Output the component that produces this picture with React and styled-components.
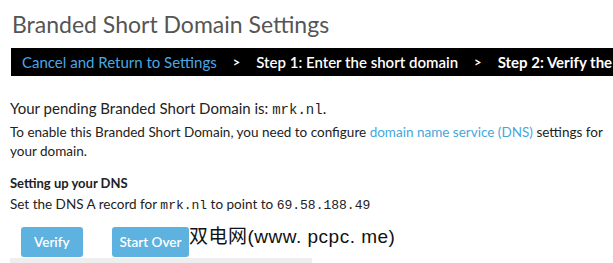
import React from 'react';
import styled, { createGlobalStyle } from 'styled-components';

const Global = createGlobalStyle`
  body {
    margin: 0;
    background: #ffffff;
    font-family: Lato, 'Open Sans', sans-serif;
    overflow: hidden;
  }
`;

const Page = styled.div`
  position: relative;
  width: 613px;
  height: 263px;
  overflow: hidden;
  padding: 0 0 0 10px;
  box-sizing: border-box;
`;

const Title = styled.h1`
  margin: 0;
  padding: 9px 0 0 2px;
  font-size: 23px;
  font-weight: 400;
  color: #555555;
  line-height: 30px;
  white-space: nowrap;
`;

const Steps = styled.div`
  margin: 9px 0 0 1px;
  height: 28px;
  background: #000000;
  display: flex;
  align-items: center;
  gap: 16px;
  padding-left: 11px;
  white-space: nowrap;
  font-size: 15px;
  width: 700px;
`;

const Step = styled.span`
  color: ${p => (p.$link ? '#4aa8e4' : '#ffffff')};
  font-weight: ${p => (p.$bold ? 700 : p.$link ? 400 : 600)};
`;

const Arrow = styled.span`
  color: #ffffff;
  font-weight: 700;
  font-size: 13px;
`;

const Lead = styled.p`
  margin: 22px 0 0;
  font-size: 15px;
  line-height: 20px;
  color: #222222;
`;

const Para = styled.p`
  margin: 3px 0 0;
  font-size: 13.5px;
  line-height: 19px;
  color: #222222;
`;

const Link = styled.a`
  color: #45a7dc;
  text-decoration: none;
`;

const Code = styled.code`
  font-family: 'Liberation Mono', 'DejaVu Sans Mono', monospace;
  font-size: ${p => p.$size || 13}px;
`;

const Heading = styled.h4`
  margin: 14px 0 0;
  font-size: 13px;
  font-weight: 700;
  line-height: 17px;
  color: #222222;
`;

const Actions = styled.div`
  display: flex;
  gap: 29px;
  padding: 12px 0 0 11px;
`;

const Button = styled.button`
  height: 30px;
  padding: 0 ${p => p.$pad || 13}px;
  border: none;
  border-radius: 3px;
  background: #5db2e0;
  color: #ffffff;
  font-family: inherit;
  font-size: 13.5px;
  font-weight: 600;
`;

const Shelf = styled.div`
  margin-top: 1px;
  width: 302px;
  height: 10px;
  background: #eeeeee;
`;

const Watermark = styled.div`
  position: absolute;
  left: 189px;
  top: 221px;
  font-family: 'Liberation Sans', 'Noto Sans CJK SC', sans-serif;
  font-size: 19px;
  color: #111111;
  white-space: nowrap;
  letter-spacing: 0.5px;
`;

export default function App() {
  return (
    <>
      <Global />
      <Page>
        <Title>Branded Short Domain Settings</Title>
        <Steps>
          <Step $link>Cancel and Return to Settings</Step>
          <Arrow>&gt;</Arrow>
          <Step>Step 1: Enter the short domain</Step>
          <Arrow>&gt;</Arrow>
          <Step $bold>Step 2: Verify the short domain</Step>
        </Steps>
        <Lead>
          Your pending Branded Short Domain is: <Code $size={14}>mrk.nl</Code>.
        </Lead>
        <Para>
          To enable this Branded Short Domain, you need to configure{' '}
          <Link href="#">domain name service (DNS)</Link> settings for your domain.
        </Para>
        <Heading>Setting up your DNS</Heading>
        <Para>
          Set the DNS A record for <Code>mrk.nl</Code> to point to <Code>69.58.188.49</Code>
        </Para>
        <Actions>
          <Button $pad={13}>Verify</Button>
          <Button $pad={8}>Start Over</Button>
        </Actions>
        <Shelf />
        <Watermark>双电网(www. pcpc. me)</Watermark>
      </Page>
    </>
  );
}
